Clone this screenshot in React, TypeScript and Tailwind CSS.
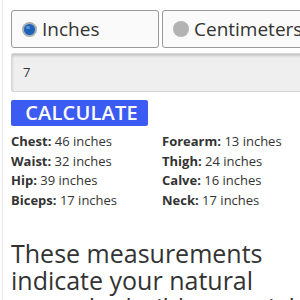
import React from "react";

const font = { fontFamily: "'Open Sans', Arial, sans-serif" };

function Radio({ checked }: { checked: boolean }) {
  return checked ? (
    <span className="w-[15px] h-[15px] rounded-full bg-[#a7adb4] flex items-center justify-center shrink-0">
      <span className="w-[11px] h-[11px] rounded-full bg-[#1f63b8] flex items-start justify-start">
        <span className="ml-[2px] mt-[2px] w-[4px] h-[3px] rounded-full bg-[#5a96dc]" />
      </span>
    </span>
  ) : (
    <span className="w-[16px] h-[16px] rounded-full bg-[#b3b3b3] shrink-0" />
  );
}

export default function App() {
  const rows: [string, string][] = [
    ["Chest", "46 inches"],
    ["Forearm", "13 inches"],
    ["Waist", "32 inches"],
    ["Thigh", "24 inches"],
    ["Hip", "39 inches"],
    ["Calve", "16 inches"],
    ["Biceps", "17 inches"],
    ["Neck", "17 inches"],
  ];
  return (
    <div className="w-[300px] h-[300px] overflow-hidden bg-white text-[#333]" style={font}>
      <div className="ml-[2px] border-l border-[#e8e8e8] h-full pl-[8px] pt-[10px]">
        <div className="flex gap-[3px] w-[400px]">
          <div className="w-[148px] h-[38px] border border-[#999] rounded-[3px] bg-[#fafafa] flex items-center pl-[10px] gap-[5px]">
            <Radio checked />
            <span className="text-[19px] leading-none">Inches</span>
          </div>
          <div className="w-[200px] h-[38px] border border-[#999] rounded-[3px] bg-[#fafafa] flex items-center pl-[10px] gap-[5px]">
            <Radio checked={false} />
            <span className="text-[19px] leading-none">Centimeters</span>
          </div>
        </div>
        <div className="mt-[5px] w-[320px] h-[39px] bg-[#efefef] border border-[#d6d6d6] rounded-[2px] shadow-[inset_0_2px_3px_rgba(0,0,0,0.18)] flex items-center pl-[11px] text-[13px]">
          7
        </div>
        <div className="mt-[8px] w-[137px] h-[26px] bg-[#3b5bf3] rounded-[2px] text-white text-[20px] font-semibold tracking-[0.2px] flex items-center justify-center leading-none pl-[4px]">
          CALCULATE
        </div>
        <div className="mt-[6px] grid grid-cols-[151px_1fr] text-[13px] leading-[19.6px]">
          {rows.map(([k, v]) => (
            <div key={k} className="whitespace-nowrap">
              <span className="font-bold">{k}:</span> {v}
            </div>
          ))}
        </div>
        <div className="mt-[30px] text-[25px] leading-[27px] w-[290px]">
          These measurements indicate your natural muscular build potential
        </div>
      </div>
    </div>
  );
}
